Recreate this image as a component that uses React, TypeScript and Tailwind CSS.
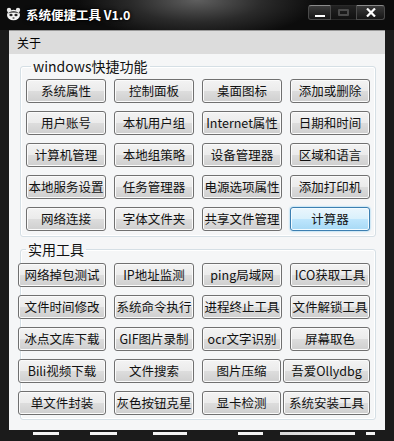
const font = "font-['Noto_Sans_CJK_SC','Noto_Sans',sans-serif]";

const btnBase =
  "h-[24px] shrink-0 rounded-[3px] border flex items-center justify-center whitespace-nowrap text-[12.5px] leading-none text-[#111]";
const btnGray =
  "border-[#707070] bg-[linear-gradient(to_bottom,#f3f3f3_0%,#ebebeb_50%,#dddddd_50%,#cfcfcf_100%)] shadow-[inset_0_0_0_1px_#fbfbfb]";
const btnBlue =
  "border-[#3c7fb1] bg-[linear-gradient(to_bottom,#eaf6fd_0%,#d9f0fc_50%,#bee6fd_50%,#a7d9f5_100%)] shadow-[inset_0_0_0_1px_#f2fbff,0_0_2px_#6cc2ef]";

const winRows = [
  ["系统属性", "控制面板", "桌面图标", "添加或删除"],
  ["用户账号", "本机用户组", "Internet属性", "日期和时间"],
  ["计算机管理", "本地组策略", "设备管理器", "区域和语言"],
  ["本地服务设置", "任务管理器", "电源选项属性", "添加打印机"],
  ["网络连接", "字体文件夹", "共享文件管理", "计算器"],
];

type Tool = { label: string; cls: string };

const toolRows: Tool[][] = [
  [
    { label: "网络掉包测试", cls: "w-[88px]" },
    { label: "IP地址监测", cls: "w-[80px] ml-[8px]" },
    { label: "ping局域网", cls: "w-[80px] ml-[8px]" },
    { label: "ICO获取工具", cls: "w-[80px] ml-[8px]" },
  ],
  [
    { label: "文件时间修改", cls: "w-[88px]" },
    { label: "系统命令执行", cls: "w-[80px] ml-[8px]" },
    { label: "进程终止工具", cls: "w-[80px] ml-[8px]" },
    { label: "文件解锁工具", cls: "w-[80px] ml-[8px]" },
  ],
  [
    { label: "冰点文库下载", cls: "w-[88px]" },
    { label: "GIF图片录制", cls: "w-[80px] ml-[8px]" },
    { label: "ocr文字识别", cls: "w-[80px] ml-[8px]" },
    { label: "屏幕取色", cls: "w-[80px] ml-[8px]" },
  ],
  [
    { label: "Bili视频下载", cls: "w-[88px]" },
    { label: "文件搜索", cls: "w-[80px] ml-[8px]" },
    { label: "图片压缩", cls: "w-[79px] ml-[8px]" },
    { label: "吾爱Ollydbg", cls: "w-[87px] ml-[2px]" },
  ],
  [
    { label: "单文件封装", cls: "w-[88px]" },
    { label: "灰色按钮克星", cls: "w-[80px] ml-[8px]" },
    { label: "显卡检测", cls: "w-[79px] ml-[8px]" },
    { label: "系统安装工具", cls: "w-[87px] ml-[2px]" },
  ],
];

function AppIcon() {
  return (
    <svg width="15" height="14" viewBox="0 0 15 14">
      <circle cx="3" cy="3" r="2.2" fill="#e8e8e8" />
      <circle cx="12" cy="3" r="2.2" fill="#e8e8e8" />
      <ellipse cx="7.5" cy="8" rx="6.5" ry="5.3" fill="#f4f4f4" />
      <path d="M2 6.5C3.5 3 11.5 3 13 6.5C11 5.5 4 5.5 2 6.5Z" fill="#555" />
      <ellipse cx="5" cy="8" rx="1.6" ry="1.3" fill="#222" />
      <ellipse cx="10" cy="8" rx="1.6" ry="1.3" fill="#222" />
      <ellipse cx="7.5" cy="11" rx="1.2" ry="0.7" fill="#444" />
    </svg>
  );
}

function WindowButtons() {
  return (
    <div className="mt-[5px] mr-[9px] flex h-[15px] items-stretch">
      <div className="flex w-[23px] items-end justify-center rounded-l-[3px] border border-[#4a4a4a] border-t-[#8a8a8a] bg-[linear-gradient(to_bottom,#3a3a3a,#161616)] pb-[2px]">
        <div className="h-[2px] w-[10px] bg-white" />
      </div>
      <div className="flex w-[25px] items-center justify-center border-y border-[#2a2a2a] bg-[linear-gradient(to_bottom,#222,#111)]">
        <div className="h-[7px] w-[11px] rounded-[1px] border-[2px] border-[#4a4a4a]" />
      </div>
      <div className="flex w-[29px] items-center justify-center rounded-r-[3px] border border-[#4a4a4a] border-t-[#8a8a8a] bg-[linear-gradient(to_bottom,#3a3a3a,#161616)]">
        <svg width="10" height="9" viewBox="0 0 10 9">
          <path d="M1 0.5L9 8.5M9 0.5L1 8.5" stroke="white" strokeWidth="2.2" />
        </svg>
      </div>
    </div>
  );
}

export default function App() {
  return (
    <div className={`${font} flex h-[441px] w-[394px] flex-col bg-[#1b1b1b]`}>
      {/* title bar */}
      <div className="flex h-[30px] shrink-0 items-start bg-[radial-gradient(ellipse_120px_40px_at_50%_0%,#5f5f5f_0%,#2a2a2a_55%,#0c0c0c_100%)]">
        <div className="ml-[6px] mt-[7px]">
          <AppIcon />
        </div>
        <div className="ml-[5px] mt-[8px] text-[12.5px] font-bold leading-[14px] text-white [text-shadow:0_0_4px_#000,0_0_2px_#000]">
          系统便捷工具 V1.0
        </div>
        <div className="flex-1" />
        <WindowButtons />
      </div>

      {/* client */}
      <div className="mx-[9px] flex h-[400px] flex-col border-t border-[#9a9a9a] bg-[#f5f6f7]">
        <div className="flex h-[23px] shrink-0 items-center bg-[#dcdcdc] pl-[8px] text-[12px] text-black">
          关于
        </div>

        <fieldset className="ml-[11px] mt-[3px] w-[356px] rounded-[3px] border border-[#d5dfe5] pb-[5px] pl-[5px] shadow-[inset_0_0_0_1px_#ffffff]">
          <legend className="ml-[5px] px-[2px] text-[14px] leading-[18px] text-[#111]">
            windows快捷功能
          </legend>
          <div className="mt-[4px] flex flex-col gap-[8px]">
            {winRows.map((row, i) => (
              <div key={i} className="flex gap-[8px]">
                {row.map((label) => (
                  <div
                    key={label}
                    className={`${btnBase} w-[80px] ${label === "计算器" ? btnBlue : btnGray}`}
                  >
                    {label}
                  </div>
                ))}
              </div>
            ))}
          </div>
        </fieldset>

        <fieldset className="ml-[11px] mt-[3px] w-[356px] rounded-[3px] border border-[#d5dfe5] pb-[4px] shadow-[inset_0_0_0_1px_#ffffff]">
          <legend className="ml-[5px] px-[2px] text-[14px] leading-[18px] text-[#111]">
            实用工具
          </legend>
          <div className="-ml-[3px] mt-[5px] flex flex-col gap-[8px]">
            {toolRows.map((row, i) => (
              <div key={i} className="flex">
                {row.map((t) => (
                  <div key={t.label} className={`${btnBase} ${btnGray} ${t.cls}`}>
                    {t.label}
                  </div>
                ))}
              </div>
            ))}
          </div>
        </fieldset>
      </div>

      {/* bottom frame */}
      <div className="flex-1 pt-[2px]">
        <div className="mx-[9px] h-[3px] bg-[linear-gradient(to_right,#1b1b1b_0px,#1b1b1b_24px,#f2f2f2_24px,#f2f2f2_50px,#1b1b1b_50px,#1b1b1b_81px,#f2f2f2_81px,#f2f2f2_108px,#1b1b1b_108px,#1b1b1b_144px,#f2f2f2_144px,#f2f2f2_178px,#1b1b1b_178px,#1b1b1b_229px,#f2f2f2_229px,#f2f2f2_254px,#1b1b1b_254px,#1b1b1b_271px,#d8d8d8_271px,#f2f2f2_346px,#1b1b1b_346px,#1b1b1b_357px,#f2f2f2_357px,#f2f2f2_366px,#1b1b1b_366px)]" />
      </div>
    </div>
  );
}
